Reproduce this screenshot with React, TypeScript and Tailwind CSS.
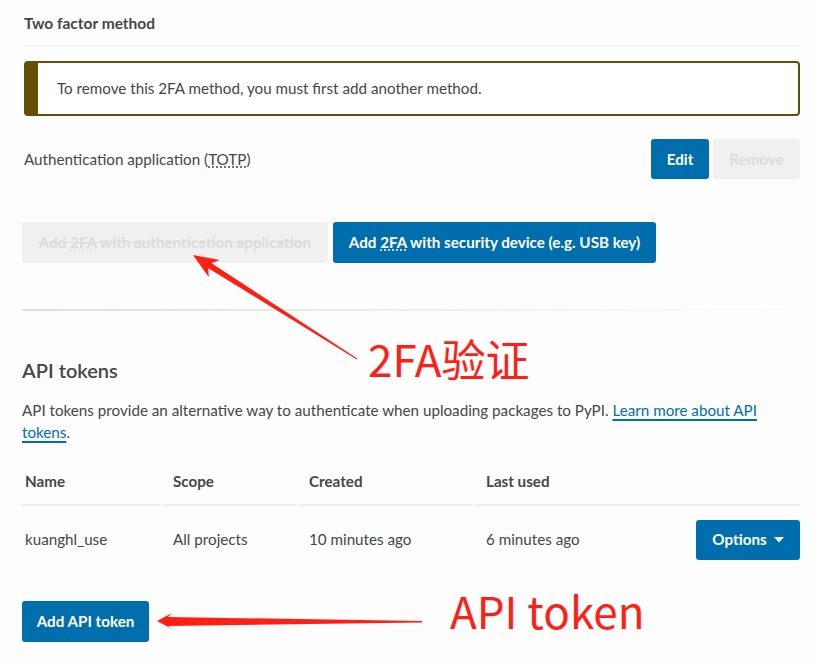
const font = { fontFamily: '"Source Sans Pro", Lato, "Noto Sans", sans-serif' };

const Abbr = ({ children }: { children: React.ReactNode }) => (
  <span className="underline decoration-dotted underline-offset-2">{children}</span>
);

const Annotations = () => (
  <>
    <svg className="absolute inset-0 pointer-events-none" width="816" height="663" viewBox="0 0 816 663">
      <polygon
        fill="#ff1f14"
        points="193,255 219.5,260 211.5,263.2 357.3,358.6 356.7,359.4 208.3,268.2 208.7,276.9"
      />
      <polygon fill="#ff1f14" points="157,621 172,613 168,617 422,621 422,622.5 168,626 172,629" />
    </svg>
    <div
      className="absolute left-[368px] top-[336px] text-[44px] leading-none text-[#ff1f14]"
      style={{ fontFamily: '"Noto Sans CJK SC", sans-serif' }}
    >
      2FA验证
    </div>
    <div
      className="absolute left-[450px] top-[588px] text-[44px] leading-none text-[#ff1f14]"
      style={{ fontFamily: '"Noto Sans CJK SC", sans-serif' }}
    >
      API token
    </div>
  </>
);

export default function App() {
  return (
    <div className="relative w-[816px] h-[663px] overflow-hidden bg-[#fdfdfd] text-[#464646]" style={font}>
      <div className="pl-[24px] pr-[16px]">
        <h3 className="pt-[13px] pb-[12px] text-[15.5px] font-bold leading-[20px]">Two factor method</h3>
        <div className="h-px bg-[#ececec]" />

        {/* warning */}
        <div className="mt-[15px] h-[55px] flex items-center rounded border-2 border-l-[14px] border-[#664f04] bg-white pl-[19px] text-[15.2px]">
          To remove this 2FA method, you must first add another method.
        </div>

        <div className="mt-[23px] flex items-center justify-between">
          <span className="text-[15.2px]">
            Authentication application (<Abbr>TOTP</Abbr>)
          </span>
          <div className="flex gap-[4px]">
            <button className="h-[40px] w-[58px] rounded-[3px] bg-[#006dad] text-[15.2px] font-bold text-white">Edit</button>
            <button className="h-[40px] w-[87px] rounded-[3px] bg-[#f0f0f0] text-[15.2px] font-bold text-[#dcdcdc]">Remove</button>
          </div>
        </div>
      </div>

      <div className="pl-[22px] pr-[16px]">
        <div className="mt-[43px] flex gap-[5px]">
          <button className="h-[41px] w-[306px] rounded-[3px] bg-[#f0f0f0] text-[15.2px] font-bold text-[#dcdcdc] line-through">
            Add <Abbr>2FA</Abbr> with authentication application
          </button>
          <button className="h-[41px] w-[323px] rounded-[3px] bg-[#006dad] text-[15.2px] font-bold text-white">
            Add <Abbr>2FA</Abbr> with security device (e.g. USB key)
          </button>
        </div>

        <div className="mt-[46px] h-[2px] bg-gradient-to-r from-[#dedede] via-[#eeeeee] to-transparent" />

        <h2 className="mt-[46px] text-[20px] font-semibold leading-[26px]">API tokens</h2>
        <p className="mt-[16px] text-[15.2px] leading-[22px] pr-[40px]">
          API tokens provide an alternative way to authenticate when uploading packages to PyPI.{' '}
          <a className="text-[#006dad] underline decoration-2 underline-offset-[3px]">Learn more about API tokens</a>.
        </p>

        <div className="mt-[27px] grid grid-cols-[139px_134px_174px_1fr] gap-x-[2px] text-[15.2px]">
          <div className="pl-[3px] pb-[11px] font-bold border-b-2 border-[#ececec]">Name</div>
          <div className="pl-[10px] pb-[11px] font-bold border-b-2 border-[#ececec]">Scope</div>
          <div className="pl-[10px] pb-[11px] font-bold border-b-2 border-[#ececec]">Created</div>
          <div className="pl-[11px] pb-[11px] font-bold border-b-2 border-[#ececec]">Last used</div>

          <div className="pl-[3px] h-[68px] flex items-center">kuanghl_use</div>
          <div className="pl-[10px] h-[68px] flex items-center">All projects</div>
          <div className="pl-[10px] h-[68px] flex items-center">10 minutes ago</div>
          <div className="pl-[11px] h-[68px] flex items-center justify-between">
            <span>6 minutes ago</span>
            <button className="h-[40px] w-[104px] rounded-[3px] bg-[#006dad] font-bold text-white flex items-center justify-center gap-[7px]">
              Options
              <svg width="10" height="6" viewBox="0 0 10 6"><polygon points="0,0 10,0 5,5.5" fill="white" /></svg>
            </button>
          </div>
        </div>

        <button className="mt-[27px] h-[41px] w-[127px] rounded-[3px] bg-[#006dad] text-[15.2px] font-bold text-white">
          Add API token
        </button>
      </div>

      <Annotations />
    </div>
  );
}
